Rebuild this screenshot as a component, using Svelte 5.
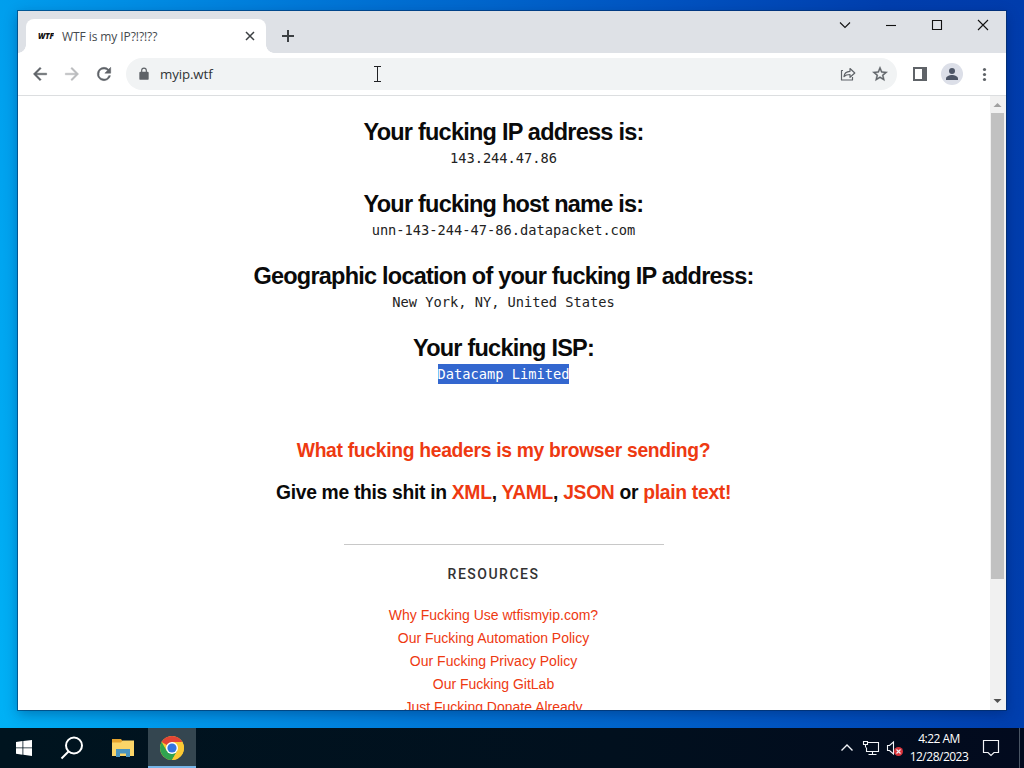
<script>
  const sections = [
    { title: 'Your fucking IP address is:', value: '143.244.47.86' },
    { title: 'Your fucking host name is:', value: 'unn-143-244-47-86.datapacket.com' },
    { title: 'Geographic location of your fucking IP address:', value: 'New York, NY, United States' },
    { title: 'Your fucking ISP:', value: 'Datacamp Limited', selected: true }
  ];

  const resources = [
    'Why Fucking Use wtfismyip.com?',
    'Our Fucking Automation Policy',
    'Our Fucking Privacy Policy',
    'Our Fucking GitLab',
    'Just Fucking Donate Already'
  ];
</script>

<div class="desktop">
  <div class="workspace">
    <div class="window">
      <div class="tabstrip">
        <div class="tab">
          <svg class="favicon" width="16" height="16" viewBox="0 0 16 16">
            <text x="0" y="10.500" textLength="16" lengthAdjust="spacingAndGlyphs">WTF</text>
          </svg>
          <span class="tab-title">WTF is my IP?!?!??</span>
          <svg class="tab-close" width="16" height="16" viewBox="0 0 16 16" fill="none" stroke="#3c4043" stroke-width="1.5">
            <path d="M4 4l8 8M12 4l-8 8" />
          </svg>
        </div>
        <svg class="new-tab" width="28" height="28" viewBox="0 0 28 28" fill="none" stroke="#3c4043" stroke-width="2">
          <path d="M14 8v12M8 14h12" />
        </svg>
        <div class="window-controls">
          <svg width="46" height="28" viewBox="0 0 46 28"><path d="M18 11.500l5 5 5-5" /></svg>
          <svg width="46" height="28" viewBox="0 0 46 28"><path d="M18 14.500h10" /></svg>
          <svg width="46" height="28" viewBox="0 0 46 28"><path d="M18.500 9.500h9v9h-9z" /></svg>
          <svg width="46" height="28" viewBox="0 0 46 28"><path d="M18 9l10 10M28 9l-10 10" /></svg>
        </div>
      </div>

      <div class="toolbar">
        <div class="tool">
          <svg width="20" height="20" viewBox="0 0 24 24" fill="#5f6368"><path d="M20 11H7.830l5.590-5.590L12 4l-8 8 8 8 1.410-1.410L7.830 13H20v-2z" stroke="#5f6368" stroke-width=".5" /></svg>
        </div>
        <div class="tool">
          <svg width="20" height="20" viewBox="0 0 24 24" fill="#babcbe"><path d="M4 11h12.170l-5.590-5.590L12 4l8 8-8 8-1.410-1.410L16.170 13H4v-2z" stroke="#babcbe" stroke-width=".5" /></svg>
        </div>
        <div class="tool">
          <svg width="20" height="20" viewBox="0 0 24 24" fill="#5f6368"><path d="M17.650 6.350A7.960 7.960 0 0 0 12 4a8 8 0 1 0 7.730 10h-2.080A6 6 0 1 1 12 6c1.660 0 3.140.69 4.220 1.780L13 11h7V4l-2.350 2.350z" stroke="#5f6368" stroke-width=".6" /></svg>
        </div>
        <div class="omnibox">
          <svg class="lock" width="14" height="14" viewBox="0 0 24 24" fill="#5f6368">
            <path d="M18 8h-1V6A5 5 0 0 0 7 6v2H6a2 2 0 0 0-2 2v10a2 2 0 0 0 2 2h12a2 2 0 0 0 2-2V10a2 2 0 0 0-2-2zM9 6a3 3 0 0 1 6 0v2H9V6z" />
          </svg>
          <span class="url">myip.wtf</span>
          <svg class="cursor" width="9" height="17" viewBox="0 0 9 17" fill="none" stroke="#202124">
            <path d="M1 .5h7M4.500 .5v15M1 15.500h7" />
          </svg>
          <div class="tool">
            <svg width="16" height="16" viewBox="0 0 16 16" fill="none" stroke="#5f6368" stroke-width="1.2" stroke-linejoin="round">
              <path d="M3 4.500H1.500v9.500h11v-3" />
              <path d="M4 10.500c.4-3.500 2.500-5 6-5.200V2.500l4.800 4.500-4.800 4.300V8.500c-2.700 0-4.500.5-6 2z" />
            </svg>
          </div>
          <div class="tool">
            <svg width="18" height="18" viewBox="0 0 24 24" fill="#5f6368"><path d="M22 9.240l-7.190-.62L12 2 9.190 8.630 2 9.240l5.460 4.730L5.820 21 12 17.270 18.180 21l-1.630-7.030L22 9.240zM12 15.400l-3.760 2.270 1-4.280-3.320-2.880 4.380-.38L12 6.100l1.710 4.040 4.380.38-3.320 2.880 1 4.280L12 15.400z" stroke="#5f6368" stroke-width=".5" /></svg>
          </div>
        </div>
        <div class="tool">
          <svg width="16" height="16" viewBox="0 0 16 16"><path d="M2 2h9v12H2z" fill="#fff" stroke="#5f6368" stroke-width="2" /><path d="M10 1h5v14h-5z" fill="#5f6368" /></svg>
        </div>
        <div class="tool">
          <svg width="22" height="22" viewBox="0 0 22 22">
            <circle cx="11" cy="11" r="11" fill="#dcdfe8" />
            <circle cx="11" cy="8" r="3" fill="#4d5566" />
            <path d="M5 17v-1.500c0-2.200 3.500-3.500 6-3.500s6 1.300 6 3.500V17z" fill="#4d5566" />
          </svg>
        </div>
        <div class="tool">
          <svg width="16" height="16" viewBox="0 0 16 16" fill="#5f6368"><circle cx="8.500" cy="3.500" r="1.600" /><circle cx="8.500" cy="8.500" r="1.600" /><circle cx="8.500" cy="13.500" r="1.600" /></svg>
        </div>
      </div>

      <div class="viewport">
        <main class="page">
          {#each sections as section}
            <section>
              <h1>{section.title}</h1>
              <p class="value"><span class:selected={section.selected}>{section.value}</span></p>
            </section>
          {/each}

          <div class="formats">
            <h3><a href="#headers">What fucking headers is my browser sending?</a></h3>
            <h3>
              Give me this shit in <a href="#xml">XML</a>, <a href="#yaml">YAML</a>, <a href="#json">JSON</a> or <a href="#text">plain text!</a>
            </h3>
          </div>

          <hr />

          <div class="resources">
            <h6>RESOURCES</h6>
            <ul>
              {#each resources as item}
                <li><a href="#resources">{item}</a></li>
              {/each}
            </ul>
          </div>
        </main>
        <div class="scrollbar">
          <svg width="13" height="17" viewBox="0 0 13 17"><path d="M2.500 11h8l-4-4z" fill="#a0a0a0" /></svg>
          <div class="thumb"></div>
          <svg width="13" height="17" viewBox="0 0 13 17"><path d="M2.500 6h8l-4 4z" fill="#505050" /></svg>
        </div>
      </div>
    </div>
  </div>

  <div class="taskbar">
    <div class="task">
      <svg width="16" height="16" viewBox="0 0 16 16" fill="#fff"><path d="M0 2l6.500-.9v6.400H0zM7.300 1L16 0v7.500H7.300zM0 8.300h6.500v6.400L0 13.800zM7.300 8.300H16V16l-8.700-1.200z" /></svg>
    </div>
    <div class="task">
      <svg width="24" height="24" viewBox="0 0 24 24" fill="none" stroke="#fff" stroke-width="2"><circle cx="14" cy="9.500" r="8" /><path d="M8.500 15.500L1.500 22.500" /></svg>
    </div>
    <div class="task explorer">
      <svg width="22" height="18" viewBox="0 0 22 18">
        <path d="M0 0h9l1.500 2H22v15H0z" fill="#e5a32e" />
        <path d="M0 3.500h9l1.500-2H22V17H0z" fill="#fbd568" />
        <path d="M4 18v-8h14v8h-4v-3.500H8V18z" fill="#4a94be" />
      </svg>
    </div>
    <div class="task active">
      <svg width="24" height="24" viewBox="0 0 24 24">
        <circle cx="12" cy="12" r="12" fill="#fbc934" />
        <path d="M12 12L1.610 6A12 12 0 0 1 22.390 6H12z" fill="#e24435" />
        <path d="M12 12l5.200 3L12 24A12 12 0 0 1 1.610 6l5.190 9z" fill="#30a350" />
        <path d="M12 6h10.390A12 12 0 0 1 12 24l5.200-9z" fill="#fbc934" />
        <circle cx="12" cy="12" r="6" fill="#fff" />
        <circle cx="12" cy="12" r="4.600" fill="#3374e0" />
      </svg>
    </div>

    <div class="tray">
      <svg width="24" height="24" viewBox="0 0 24 24"><path d="M6.500 14.500L12 9l5.500 5.500" stroke-width="1.400" /></svg>
      <svg width="24" height="24" viewBox="0 0 24 24"><path d="M9 6.500h10.500v9h-12v-4M13.500 15.500v3M9.500 18.500h8M4.500 5.500h4v3h-4zM6.500 8.500v3" /></svg>
      <svg width="24" height="24" viewBox="0 0 24 24">
        <path d="M4.500 9.500h2l4-3.500v12l-4-3.500h-2z" />
        <circle class="muted" cx="15.500" cy="15.500" r="4.500" />
        <path d="M13.500 13.500l4 4M17.500 13.500l-4 4" />
      </svg>
      <div class="clock">
        <span>4:22 AM</span>
        <span>12/28/2023</span>
      </div>
      <svg class="notifications" width="20" height="20" viewBox="0 0 20 20"><path d="M2.500 2.500h15v12h-4.500l-3 3-3-3H2.500z" stroke-width="1.200" /></svg>
      <div class="show-desktop"></div>
    </div>
  </div>
</div>

<style>
  :global(body) {
    margin: 0;
    overflow: hidden;
  }

  .desktop {
    width: 1024px;
    height: 768px;
    display: flex;
    flex-direction: column;
    overflow: hidden;
    background: linear-gradient(80deg, #00b2f6 0%, #0098ea 16%, #0078d8 38%, #0052c0 70%, #003fae 88%, #003cac 100%);
    font-family: "Open Sans", "Noto Sans", sans-serif;
  }

  .workspace {
    box-sizing: border-box;
    height: 728px;
    padding: 11px 18px 18px;
  }

  .window {
    height: 699px;
    width: 988px;
    display: flex;
    flex-direction: column;
    background: #fff;
    box-shadow: 0 0 0 1px rgba(0, 40, 90, 0.55), 0 4px 12px rgba(0, 20, 70, 0.35);
  }

  .tabstrip {
    height: 42px;
    flex: none;
    display: flex;
    align-items: flex-start;
    padding-left: 8px;
    background: #dee1e6;
  }

  .tab {
    position: relative;
    box-sizing: border-box;
    width: 240px;
    height: 34px;
    margin-top: 8px;
    padding: 0 8px 0 12px;
    display: flex;
    align-items: center;
    background: #fff;
    border-radius: 8px 8px 0 0;
  }

  .tab::before,
  .tab::after {
    content: '';
    position: absolute;
    bottom: 0;
    width: 8px;
    height: 8px;
  }

  .tab::before {
    left: -8px;
    background: radial-gradient(circle at 0 0, transparent 7.5px, #fff 8px);
  }

  .tab::after {
    right: -8px;
    background: radial-gradient(circle at 100% 0, transparent 7.5px, #fff 8px);
  }

  .favicon {
    margin-right: 8px;
    font: italic 800 9px "Open Sans", sans-serif;
    fill: #111;
  }

  .tab-title {
    flex: 1;
    font-size: 12px;
    letter-spacing: -0.08px;
    color: #45494d;
    white-space: nowrap;
  }

  .new-tab {
    margin: 11px 0 0 8px;
  }

  .window-controls {
    display: flex;
    margin-left: auto;
  }

  .window-controls svg {
    fill: none;
    stroke: #111;
    stroke-width: 1.1;
  }

  .toolbar {
    height: 42px;
    flex: none;
    display: flex;
    align-items: center;
    padding: 0 6px;
    border-bottom: 1px solid #dcdee0;
  }

  .tool {
    width: 32px;
    height: 32px;
    display: flex;
    align-items: center;
    justify-content: center;
  }

  .omnibox {
    box-sizing: border-box;
    flex: 1;
    height: 32px;
    margin: 0 7px 0 6px;
    padding: 0 1px 0 11px;
    display: flex;
    align-items: center;
    background: #f1f3f4;
    border-radius: 16px;
  }

  .url {
    width: 213px;
    margin-left: 9px;
    font-size: 13.3px;
    letter-spacing: -0.12px;
    color: #303336;
  }

  .cursor {
    margin-right: auto;
  }

  .viewport {
    flex: 1;
    min-height: 0;
    display: flex;
    overflow: hidden;
  }

  .page {
    width: 971px;
    padding-top: 21px;
    overflow: hidden;
    text-align: center;
    font-family: "Liberation Sans", Arial, sans-serif;
    color: #0a0a0a;
  }

  section {
    margin-bottom: 20px;
  }

  h1 {
    margin: 0;
    font-size: 23.5px;
    line-height: 30px;
    letter-spacing: -0.77px;
  }

  .value {
    margin: 0;
    height: 22px;
    font: 13.7px/22px "DejaVu Sans Mono", monospace;
    color: #222;
  }

  .selected {
    display: inline-block;
    height: 20px;
    line-height: 20px;
    background: #3367cf;
    color: #fff;
  }

  a {
    color: #ee3911;
    text-decoration: none;
  }

  .formats {
    padding-top: 25px;
  }

  h3 {
    margin: 0;
    font-size: 19.3px;
    line-height: 42px;
    letter-spacing: -0.3px;
  }

  hr {
    width: 320px;
    margin: 30px auto 0;
    border: 0;
    border-top: 1px solid #c8c8c8;
  }

  .resources {
    margin-right: 20px;
  }

  h6 {
    margin: 19px 0 0;
    font: 500 14px/20px Roboto, sans-serif;
    letter-spacing: 1.5px;
    color: #333;
  }

  ul {
    margin: 20px 0 0;
    padding: 0;
    list-style: none;
    font-size: 14px;
    line-height: 23px;
  }

  .scrollbar {
    width: 13px;
    margin-left: 1px;
    display: flex;
    flex-direction: column;
    background: #f1f1f1;
    border: solid #f1f1f1;
    border-width: 0 2px 0 1px;
  }

  .thumb {
    height: 466px;
    margin-bottom: auto;
    background: #c1c1c1;
  }

  .taskbar {
    height: 40px;
    display: flex;
    background: linear-gradient(90deg, #00141f, #01101e 60%, #020a1e);
  }

  .task {
    box-sizing: border-box;
    width: 48px;
    height: 40px;
    display: flex;
    align-items: center;
    justify-content: center;
  }

  .explorer {
    width: 52px;
    padding-left: 2px;
  }

  .active {
    background: #344650;
    border-bottom: 2px solid #76b5e8;
    padding-top: 2px;
  }

  .tray {
    margin-left: auto;
    display: flex;
    align-items: center;
  }

  .tray svg {
    fill: none;
    stroke: #f2f4f8;
    stroke-width: 1.1;
  }

  .tray .muted {
    fill: #d9343c;
    stroke: none;
  }

  .clock {
    width: 64px;
    display: flex;
    flex-direction: column;
    align-items: center;
    font-size: 12px;
    line-height: 18px;
    letter-spacing: -0.5px;
    color: #fff;
  }

  .notifications {
    margin: 0 18px 0 10px;
  }

  .show-desktop {
    width: 4px;
    height: 40px;
    border-left: 1px solid #4a5564;
  }
</style>
